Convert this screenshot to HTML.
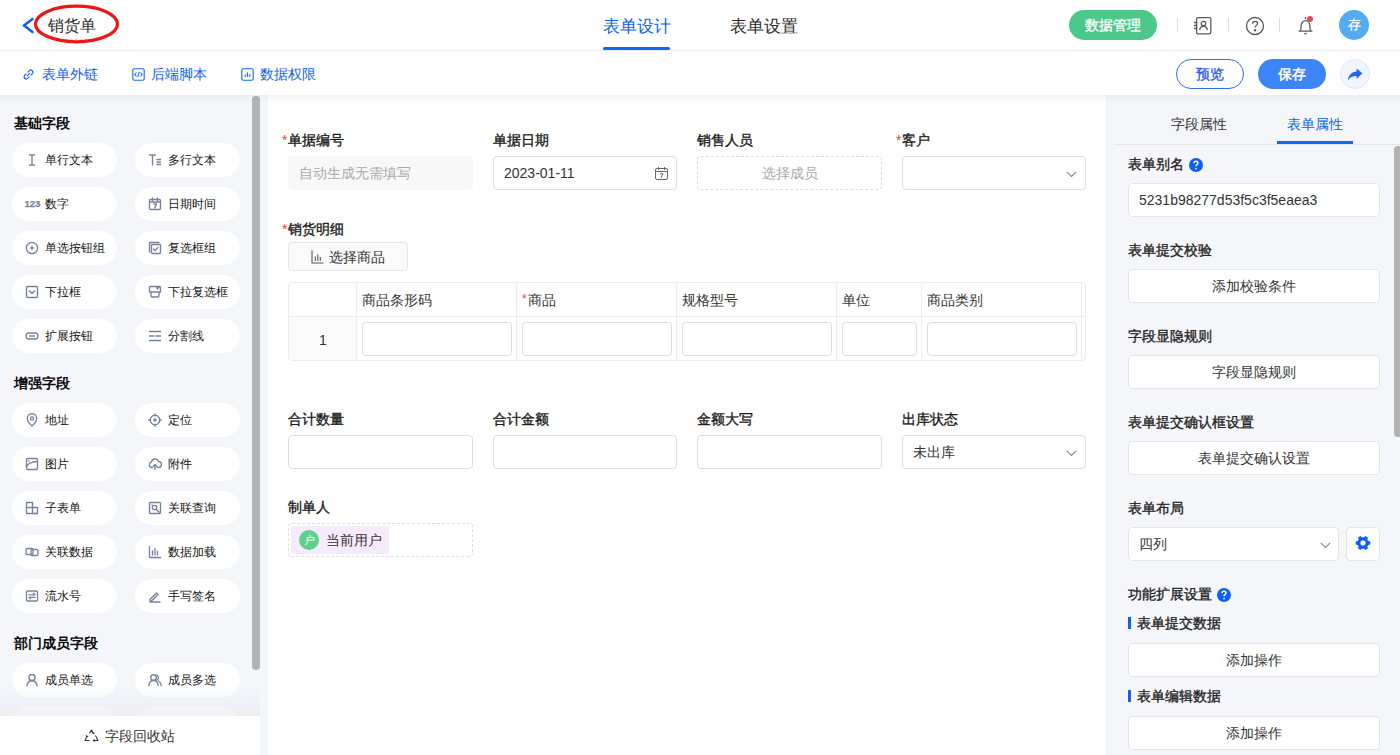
<!DOCTYPE html>
<html><head><meta charset="utf-8">
<style>
*{box-sizing:border-box;margin:0;padding:0}
html,body{width:1400px;height:755px;overflow:hidden;background:#fff;font-family:"Liberation Sans",sans-serif;color:#333}
.a{position:absolute}
.t14{font-size:14px;line-height:20px;white-space:nowrap}
.t12{font-size:12px;line-height:20px;white-space:nowrap}
.b{font-weight:bold}
svg{display:block}
/* header */
#hdr{left:0;top:0;width:1400px;height:51px;background:#fff;border-bottom:1px solid #ebedf0}
#tb{left:0;top:51px;width:1400px;height:44px;background:#fff}
.blue{color:#0f5ef8}
.divl{width:1px;height:14px;top:18px;background:#dddddd}
/* left panel */
#lp{left:0;top:95px;width:268px;height:660px;background:#f5f6fa;overflow:hidden}
.sec{left:14px;font-size:14px;line-height:20px;font-weight:bold;color:#0a0a0a}
.pill{width:105px;height:34px;border-radius:17px;background:#fff}
.pill .ic{position:absolute;left:13px;top:10px;width:14px;height:14px}
.pill .tx{position:absolute;left:33px;top:7px;font-size:12px;line-height:20px;color:#141414;white-space:nowrap}
/* canvas */
#cv{left:268px;top:95px;width:838px;height:660px;background:#fff;overflow:hidden}
.lbl{font-size:14px;line-height:20px;font-weight:500;color:#1a1a1a;-webkit-text-stroke:0.35px #1a1a1a;white-space:nowrap}
.req{color:#f04134;font-weight:normal}
.inp{height:34px;border:1px solid #dddddd;border-radius:4px;background:#fff}
/* right panel */
#rp{left:1106px;top:95px;width:294px;height:660px;background:#f5f6fa;overflow:hidden}
.rbtn{left:22px;width:252px;height:34px;border:1px solid #e3e4e8;border-radius:4px;background:#fff;text-align:center;font-size:14px;line-height:32px;color:#333}
.rl{left:22px;font-size:14px;line-height:20px;font-weight:500;color:#1f1f1f;-webkit-text-stroke:0.35px #1f1f1f;white-space:nowrap}
</style></head><body>

<!-- HEADER -->
<div id="hdr" class="a">
  <svg class="a" style="left:20px;top:14px" width="18" height="24" viewBox="0 0 18 24"><polyline points="12.5,5 4,11.5 12.5,18" fill="none" stroke="#0f5ff2" stroke-width="2.6" stroke-linecap="round" stroke-linejoin="round"/></svg>
  <div class="a" style="left:48px;top:16px;font-size:16px;line-height:20px;color:#2b2b2b">销货单</div>
  <div class="a" style="left:46px;top:39px;width:46px;border-top:1px dashed #d8dde4"></div>
  <svg class="a" style="left:30px;top:2px" width="94" height="46" viewBox="0 0 94 46"><ellipse cx="46.5" cy="22" rx="41" ry="17.8" fill="none" stroke="#f01414" stroke-width="3.2"/></svg>

  <div class="a" style="left:603px;top:16px;font-size:16.5px;line-height:20px;color:#0a5ff7">表单设计</div>
  <div class="a" style="left:603px;top:47px;width:67px;height:3px;border-radius:2px;background:#1466f5"></div>
  <div class="a" style="left:730px;top:16px;font-size:16.5px;line-height:20px;color:#2b2b2b">表单设置</div>

  <div class="a" style="left:1069px;top:10px;width:88px;height:30px;border-radius:15px;background:#4cc98a;color:#fff;font-size:14px;line-height:30px;text-align:center;-webkit-text-stroke:0.3px #fff">数据管理</div>
  <div class="a divl" style="left:1177px"></div>
  <svg class="a" style="left:1193px;top:16px" width="20" height="20" viewBox="0 0 20 20" fill="none" stroke="#5a5a5a" stroke-width="1.3"><rect x="3.6" y="1.6" width="14.2" height="16.2" rx="1.4"/><circle cx="10.5" cy="7.6" r="2.3"/><path d="M6.6 14c0.5-2.4 1.9-3.6 3.9-3.6s3.4 1.2 3.9 3.6"/><path d="M1 6.5h3.2M1 9.5h3.2M1 12.5h3.2"/></svg>
  <div class="a divl" style="left:1228px"></div>
  <svg class="a" style="left:1245px;top:16px" width="20" height="20" viewBox="0 0 20 20" fill="none" stroke="#5a5a5a" stroke-width="1.3"><circle cx="10" cy="10" r="8.5"/><path d="M7.6 7.8c0-1.5 1.1-2.5 2.5-2.5s2.5 1 2.5 2.3c0 1.9-2.5 2-2.5 3.9"/><circle cx="10.1" cy="14.3" r="0.6" fill="#5a5a5a"/></svg>
  <div class="a divl" style="left:1279px"></div>
  <svg class="a" style="left:1296px;top:15px" width="20" height="21" viewBox="0 0 20 21" fill="none" stroke="#5a5a5a" stroke-width="1.3"><path d="M2.6 16.2h13.8M4 16.2c1-1.2 1.2-3 1.2-5.6 0-2.8 1.9-4.9 4.3-4.9s4.3 2.1 4.3 4.9c0 2.6 0.2 4.4 1.2 5.6"/><path d="M8.3 18.6h2.4"/><path d="M9.5 2v2"/></svg>
  <div class="a" style="left:1307px;top:16px;width:6px;height:6px;border-radius:50%;background:#e74c4c"></div>
  <div class="a" style="left:1339px;top:10px;width:30px;height:30px;border-radius:50%;background:#55abef;color:#fff;font-size:13px;line-height:30px;text-align:center;-webkit-text-stroke:0.3px #fff">存</div>
</div>

<!-- TOOLBAR -->
<div id="tb" class="a">
  <svg class="a" style="left:22px;top:17px" width="13" height="13" viewBox="0 0 13 13" fill="none" stroke="#1a63f5" stroke-width="1.2"><path d="M5.2 7.8l2.6-2.6"/><path d="M4.3 5.6L2.6 7.3a2.2 2.2 0 0 0 3.1 3.1l1.7-1.7"/><path d="M8.7 7.4l1.7-1.7a2.2 2.2 0 0 0-3.1-3.1L5.6 4.3"/></svg>
  <div class="a t14 blue" style="left:42px;top:13px">表单外链</div>
  <svg class="a" style="left:132px;top:17px" width="13" height="13" viewBox="0 0 13 13" fill="none" stroke="#1a63f5" stroke-width="1.1"><rect x="0.8" y="0.8" width="11.4" height="11.4" rx="1.5"/><path d="M4.5 4.5L2.8 6.5l1.7 2M8.5 4.5l1.7 2-1.7 2M7.2 3.8L5.8 9.2"/></svg>
  <div class="a t14 blue" style="left:151px;top:13px">后端脚本</div>
  <svg class="a" style="left:241px;top:17px" width="13" height="13" viewBox="0 0 13 13" fill="none" stroke="#1a63f5" stroke-width="1.1"><rect x="0.8" y="0.8" width="11.4" height="11.4" rx="1.5"/><path d="M4.2 9V6.5M6.5 9V4.5M8.8 9V6"/></svg>
  <div class="a t14 blue" style="left:260px;top:13px">数据权限</div>

  <div class="a" style="left:1176px;top:8px;width:68px;height:30px;border:1px solid #2f6df6;border-radius:15px;color:#2756e8;font-size:14px;line-height:28px;text-align:center;-webkit-text-stroke:0.3px #2756e8">预览</div>
  <div class="a b" style="left:1258px;top:8px;width:68px;height:30px;border-radius:15px;background:#3d84f7;color:#fff;font-size:14px;line-height:30px;text-align:center">保存</div>
  <div class="a" style="left:1340px;top:8px;width:30px;height:30px;border-radius:50%;background:#f0f5ff;border:1px solid #dde7fb"></div>
  <svg class="a" style="left:1347px;top:17px" width="16" height="13" viewBox="0 0 16 13"><path d="M15.3 5.2L9.6 0.6v2.9C4.6 3.9 1.6 7.2 0.8 12.4c1.9-3 4.6-4.4 8.8-4.4v2.9z" fill="#1f66f0"/></svg>
</div>

<!-- LEFT PANEL -->
<div id="lp" class="a">
<div class="a sec" style="top:18px">基础字段</div>
<div class="a pill" style="left:12px;top:48px"><svg class="ic" width="14" height="14" viewBox="0 0 14 14" fill="none" stroke="#75829b" stroke-width="1.35" stroke-linecap="round" stroke-linejoin="round"><path d="M4.5 2h5M4.5 12h5M7 2v10"/></svg><span class="tx">单行文本</span></div>
<div class="a pill" style="left:135px;top:48px"><svg class="ic" width="14" height="14" viewBox="0 0 14 14" fill="none" stroke="#75829b" stroke-width="1.35" stroke-linecap="round" stroke-linejoin="round"><path d="M1.5 2h6M4.5 2v10M9 6.5h3.5M9 9h3.5M9 11.5h3.5"/></svg><span class="tx">多行文本</span></div>
<div class="a pill" style="left:12px;top:92px"><div class="ic" style="left:12.5px;top:10px;width:auto;height:auto;font-size:9.5px;line-height:14px;font-weight:bold;-webkit-text-stroke:0.25px #75829b;color:#75829b;font-family:'Liberation Sans',sans-serif">123</div><span class="tx">数字</span></div>
<div class="a pill" style="left:135px;top:92px"><svg class="ic" width="14" height="14" viewBox="0 0 14 14" fill="none" stroke="#75829b" stroke-width="1.35" stroke-linecap="round" stroke-linejoin="round"><rect x="1.5" y="2.5" width="11" height="10" rx="1.2"/><path d="M1.5 5h11M4.5 1v2.5M9.5 1v2.5M5.8 7h2.6l-1.6 4"/></svg><span class="tx">日期时间</span></div>
<div class="a pill" style="left:12px;top:136px"><svg class="ic" width="14" height="14" viewBox="0 0 14 14" fill="none" stroke="#75829b" stroke-width="1.35" stroke-linecap="round" stroke-linejoin="round"><circle cx="7" cy="7" r="5.6"/><circle cx="7" cy="7" r="1" fill="#75829b"/></svg><span class="tx">单选按钮组</span></div>
<div class="a pill" style="left:135px;top:136px"><svg class="ic" width="14" height="14" viewBox="0 0 14 14" fill="none" stroke="#75829b" stroke-width="1.35" stroke-linecap="round" stroke-linejoin="round"><path d="M1.5 11V1.5H11"/><rect x="3.5" y="3.5" width="9" height="9" rx="0.8"/><path d="M5.5 8l1.5 1.5 3-3"/></svg><span class="tx">复选框组</span></div>
<div class="a pill" style="left:12px;top:180px"><svg class="ic" width="14" height="14" viewBox="0 0 14 14" fill="none" stroke="#75829b" stroke-width="1.35" stroke-linecap="round" stroke-linejoin="round"><rect x="1.5" y="1.5" width="11" height="11" rx="1.2"/><path d="M4.5 6l2.5 2.5L9.5 6"/></svg><span class="tx">下拉框</span></div>
<div class="a pill" style="left:135px;top:180px"><svg class="ic" width="14" height="14" viewBox="0 0 14 14" fill="none" stroke="#75829b" stroke-width="1.35" stroke-linecap="round" stroke-linejoin="round"><path d="M1.5 7V2.5a1 1 0 0 1 1-1h9a1 1 0 0 1 1 1V7zM3 7v3.5A1.5 1.5 0 0 0 4.5 12h5a1.5 1.5 0 0 0 1.5-1.5V7M8 1.5l1.5 2.5 2-2.5"/></svg><span class="tx">下拉复选框</span></div>
<div class="a pill" style="left:12px;top:224px"><svg class="ic" width="14" height="14" viewBox="0 0 14 14" fill="none" stroke="#75829b" stroke-width="1.35" stroke-linecap="round" stroke-linejoin="round"><rect x="1" y="4" width="12" height="6" rx="3"/><path d="M4.5 7h5"/></svg><span class="tx">扩展按钮</span></div>
<div class="a pill" style="left:135px;top:224px"><svg class="ic" width="14" height="14" viewBox="0 0 14 14" fill="none" stroke="#75829b" stroke-width="1.35" stroke-linecap="round" stroke-linejoin="round"><path d="M1.5 2.5h11M1.5 11.5h11M1.5 7h4.5M8 7h4.5"/></svg><span class="tx">分割线</span></div>
<div class="a sec" style="top:278px">增强字段</div>
<div class="a pill" style="left:12px;top:308px"><svg class="ic" width="14" height="14" viewBox="0 0 14 14" fill="none" stroke="#75829b" stroke-width="1.35" stroke-linecap="round" stroke-linejoin="round"><path d="M7 13s-4.7-4.3-4.7-7.6a4.7 4.7 0 0 1 9.4 0C11.7 8.7 7 13 7 13z"/><circle cx="7" cy="5.5" r="1.6"/></svg><span class="tx">地址</span></div>
<div class="a pill" style="left:135px;top:308px"><svg class="ic" width="14" height="14" viewBox="0 0 14 14" fill="none" stroke="#75829b" stroke-width="1.35" stroke-linecap="round" stroke-linejoin="round"><circle cx="7" cy="7" r="4.8"/><circle cx="7" cy="7" r="1" fill="#75829b"/><path d="M7 0.8v2M7 11.2v2M0.8 7h2M11.2 7h2"/></svg><span class="tx">定位</span></div>
<div class="a pill" style="left:12px;top:352px"><svg class="ic" width="14" height="14" viewBox="0 0 14 14" fill="none" stroke="#75829b" stroke-width="1.35" stroke-linecap="round" stroke-linejoin="round"><rect x="1.5" y="1.5" width="11" height="11" rx="1.2"/><path d="M1.5 9.5C4 6 6 5 12.5 4.5M3.5 4h0.5"/></svg><span class="tx">图片</span></div>
<div class="a pill" style="left:135px;top:352px"><svg class="ic" width="14" height="14" viewBox="0 0 14 14" fill="none" stroke="#75829b" stroke-width="1.35" stroke-linecap="round" stroke-linejoin="round"><path d="M4.5 10.5H3.8A2.8 2.8 0 0 1 3.5 5a3.6 3.6 0 0 1 7-0.5 2.9 2.9 0 0 1 0 6h-1"/><path d="M7 12.5V7.5M5.3 9.2L7 7.5l1.7 1.7"/></svg><span class="tx">附件</span></div>
<div class="a pill" style="left:12px;top:396px"><svg class="ic" width="14" height="14" viewBox="0 0 14 14" fill="none" stroke="#75829b" stroke-width="1.35" stroke-linecap="round" stroke-linejoin="round"><path d="M1.5 12.5V1.5h6v5h5v6zM1.5 6.5h6M7.5 6.5v6"/></svg><span class="tx">子表单</span></div>
<div class="a pill" style="left:135px;top:396px"><svg class="ic" width="14" height="14" viewBox="0 0 14 14" fill="none" stroke="#75829b" stroke-width="1.35" stroke-linecap="round" stroke-linejoin="round"><rect x="1.5" y="1.5" width="11" height="11" rx="1"/><circle cx="6.5" cy="6.5" r="2.2"/><path d="M8.2 8.2l3 3M4 3.5h0"/></svg><span class="tx">关联查询</span></div>
<div class="a pill" style="left:12px;top:440px"><svg class="ic" width="14" height="14" viewBox="0 0 14 14" fill="none" stroke="#75829b" stroke-width="1.35" stroke-linecap="round" stroke-linejoin="round"><rect x="1" y="3.5" width="7" height="6" rx="1.2"/><rect x="6" y="4.5" width="7" height="6" rx="1.2"/></svg><span class="tx">关联数据</span></div>
<div class="a pill" style="left:135px;top:440px"><svg class="ic" width="14" height="14" viewBox="0 0 14 14" fill="none" stroke="#75829b" stroke-width="1.35" stroke-linecap="round" stroke-linejoin="round"><path d="M1.5 1.5v11h11M4.5 10V6M7 10V3.5M9.5 10V6.5"/></svg><span class="tx">数据加载</span></div>
<div class="a pill" style="left:12px;top:484px"><svg class="ic" width="14" height="14" viewBox="0 0 14 14" fill="none" stroke="#75829b" stroke-width="1.35" stroke-linecap="round" stroke-linejoin="round"><rect x="1.5" y="2" width="11" height="10" rx="1"/><path d="M4 5.8h6L8.4 4.3M10 8.3H4l1.6 1.5"/></svg><span class="tx">流水号</span></div>
<div class="a pill" style="left:135px;top:484px"><svg class="ic" width="14" height="14" viewBox="0 0 14 14" fill="none" stroke="#75829b" stroke-width="1.35" stroke-linecap="round" stroke-linejoin="round"><path d="M2 10.5l6.5-6.5 1.5 1.5-6.5 6.5H2zM2 13h10"/></svg><span class="tx">手写签名</span></div>
<div class="a sec" style="top:538px">部门成员字段</div>
<div class="a pill" style="left:12px;top:568px"><svg class="ic" width="14" height="14" viewBox="0 0 14 14" fill="none" stroke="#75829b" stroke-width="1.35" stroke-linecap="round" stroke-linejoin="round"><circle cx="7" cy="4.5" r="3"/><path d="M1.8 13c0.5-3.5 2.5-5.3 5.2-5.3s4.7 1.8 5.2 5.3"/></svg><span class="tx">成员单选</span></div>
<div class="a pill" style="left:135px;top:568px"><svg class="ic" width="14" height="14" viewBox="0 0 14 14" fill="none" stroke="#75829b" stroke-width="1.35" stroke-linecap="round" stroke-linejoin="round"><circle cx="5.5" cy="4.5" r="2.8"/><path d="M0.8 12.5c0.4-3.2 2.2-5 4.7-5s4.3 1.8 4.7 5M8.8 2a2.7 2.7 0 0 1 0 5M10.5 8c1.5 0.8 2.4 2.3 2.7 4.5"/></svg><span class="tx">成员多选</span></div>
<div class="a pill" style="left:12px;top:612px"><span class="tx">部门单选</span></div>
<div class="a pill" style="left:135px;top:612px"><span class="tx">部门多选</span></div>
<div class="a" style="left:252px;top:1px;width:8px;height:574px;border-radius:4px;background:#b3b3b3"></div>
<div class="a" style="left:0;top:591px;width:260px;height:30px;background:linear-gradient(rgba(245,246,250,0),rgba(230,232,238,0.6))"></div>
<div class="a" style="left:0;top:621px;width:260px;height:39px;background:#fff"><svg class="a" style="left:84px;top:13px" width="15" height="14" viewBox="0 0 15 14" fill="none" stroke="#333" stroke-width="1.1" stroke-linejoin="round"><path d="M5.5 4.5L7.5 1l2 3.5M11.5 6.5l2.5 5H9.5M5.5 11.5H1l2-4"/><path d="M8.5 3.5l1 1 1-0.5M10.5 12.5l-1-1 1-1M2 6.5l1 1 1.2-0.3"/></svg><span class="a t14" style="left:105px;top:10px;color:#333">字段回收站</span></div>

</div>

<!-- CANVAS -->
<div id="cv" class="a">
<div class="a lbl" style="left:20px;top:35px">单据编号</div><div class="a req" style="left:14px;top:35px;font-size:14px;line-height:20px">*</div>
<div class="a lbl" style="left:225px;top:35px">单据日期</div>
<div class="a lbl" style="left:429px;top:35px">销售人员</div>
<div class="a lbl" style="left:634px;top:35px">客户</div><div class="a req" style="left:628px;top:35px;font-size:14px;line-height:20px">*</div>
<div class="a" style="left:20px;top:61px;width:185px;height:34px;border-radius:4px;background:#f8f8f9"><span class="a t14" style="left:11px;top:7px;color:#a9a9a9">自动生成无需填写</span></div>
<div class="a inp" style="left:225px;top:61px;width:184px"><span class="a t14" style="left:10px;top:6px;color:#333">2023-01-11</span><svg class="a" style="left:160px;top:9px" width="15" height="15" viewBox="0 0 15 15" fill="none" stroke="#666" stroke-width="1"><rect x="1.5" y="2.5" width="12" height="11" rx="1.5"/><path d="M1.5 5.5h12M4.5 1v3M10.5 1v3M6 7.8h2.8L7 12"/></svg></div>
<div class="a" style="left:429px;top:61px;width:185px;height:34px;border:1px dashed #dddddd;border-radius:4px;text-align:center;font-size:14px;line-height:32px;color:#a9a9a9">选择成员</div>
<div class="a inp" style="left:634px;top:61px;width:184px"><svg class="a" style="left:163px;top:14px" width="11" height="7" viewBox="0 0 11 7" fill="none" stroke="#888" stroke-width="1.1"><path d="M0.8 0.8L5.5 5.5 10.2 0.8"/></svg></div>
<div class="a lbl" style="left:20px;top:124px">销货明细</div><div class="a req" style="left:14px;top:124px;font-size:14px;line-height:20px">*</div>
<div class="a" style="left:20px;top:147px;width:120px;height:29px;border:1px solid #e3e3e3;border-radius:4px;background:#fafafa"><svg class="a" style="left:22px;top:7px" width="13" height="14" viewBox="0 0 13 14" fill="none" stroke="#555" stroke-width="1.1"><path d="M1 0.5v12.5h11.5M4.3 11V6.5M6.8 11V4.5M9.3 11V7"/></svg><span class="a t14" style="left:40px;top:4px;color:#333">选择商品</span></div>
<div class="a" style="left:20px;top:187px;width:798px;height:79px;border:1px solid #ececec;border-radius:4px;overflow:hidden;background:#fff">
<div class="a" style="left:0;top:34px;width:67px;height:44px;background:#fbfbfb"></div>
<div class="a" style="left:0;top:33px;width:798px;height:1px;background:#ececec"></div>
<div class="a" style="left:67px;top:0;width:1px;height:79px;background:#ececec"></div>
<div class="a" style="left:227px;top:0;width:1px;height:79px;background:#ececec"></div>
<div class="a" style="left:387px;top:0;width:1px;height:79px;background:#ececec"></div>
<div class="a" style="left:547px;top:0;width:1px;height:79px;background:#ececec"></div>
<div class="a" style="left:632px;top:0;width:1px;height:79px;background:#ececec"></div>
<div class="a" style="left:792px;top:0;width:1px;height:79px;background:#ececec"></div>
<span class="a t14" style="left:30px;top:47px;color:#333">1</span>
<span class="a t14" style="left:73px;top:7px;color:#333">商品条形码</span>
<div class="a inp" style="left:73px;top:39px;width:150px"></div>
<span class="a req" style="left:233px;top:6px;font-size:12px;line-height:20px">*</span><span class="a t14" style="left:239px;top:7px;color:#333">商品</span>
<div class="a inp" style="left:233px;top:39px;width:150px"></div>
<span class="a t14" style="left:393px;top:7px;color:#333">规格型号</span>
<div class="a inp" style="left:393px;top:39px;width:150px"></div>
<span class="a t14" style="left:553px;top:7px;color:#333">单位</span>
<div class="a inp" style="left:553px;top:39px;width:75px"></div>
<span class="a t14" style="left:638px;top:7px;color:#333">商品类别</span>
<div class="a inp" style="left:638px;top:39px;width:150px"></div>
<div class="a" style="left:798px;top:0;width:1px;height:79px;background:#ececec"></div>
</div>
<div class="a lbl" style="left:20px;top:314px">合计数量</div>
<div class="a lbl" style="left:225px;top:314px">合计金额</div>
<div class="a lbl" style="left:429px;top:314px">金额大写</div>
<div class="a lbl" style="left:634px;top:314px">出库状态</div>
<div class="a inp" style="left:20px;top:340px;width:185px"></div>
<div class="a inp" style="left:225px;top:340px;width:184px"></div>
<div class="a inp" style="left:429px;top:340px;width:185px"></div>
<div class="a inp" style="left:634px;top:340px;width:184px"><span class="a t14" style="left:10px;top:6px;color:#333">未出库</span><svg class="a" style="left:163px;top:14px" width="11" height="7" viewBox="0 0 11 7" fill="none" stroke="#888" stroke-width="1.1"><path d="M0.8 0.8L5.5 5.5 10.2 0.8"/></svg></div>
<div class="a lbl" style="left:20px;top:402px">制单人</div>
<div class="a" style="left:20px;top:428px;width:185px;height:34px;border:1px dashed #dddddd;border-radius:4px"><div class="a" style="left:2px;top:2px;width:98px;height:28px;border-radius:2px;background:#f6ebfd"></div><div class="a" style="left:10px;top:6px;width:20px;height:20px;border-radius:50%;background:#5fcf89;color:#fff;font-size:11px;line-height:20px;text-align:center">户</div><span class="a t14" style="left:37px;top:6px;color:#333">当前用户</span></div>

</div>

<!-- RIGHT PANEL -->
<div id="rp" class="a">
<div class="a t14" style="left:65px;top:19px;color:#333">字段属性</div>
<div class="a t14" style="left:181px;top:19px;color:#0a5ff7">表单属性</div>
<div class="a" style="left:171px;top:46px;width:76px;height:3px;background:#1466f5"></div>
<div class="a" style="left:8px;top:49px;width:286px;height:1px;background:#e4e4e4"></div>
<div class="a rl" style="top:59px">表单别名</div><svg class="a" style="left:83px;top:63px" width="14" height="14" viewBox="0 0 14 14"><circle cx="7" cy="7" r="7" fill="#0d60f5"/><path d="M5 5.3c0-1.2 0.9-2 2-2s2 0.8 2 1.8c0 1.5-2 1.6-2 3.1" fill="none" stroke="#fff" stroke-width="1.4"/><circle cx="7" cy="10.6" r="0.85" fill="#fff"/></svg>
<div class="a" style="left:22px;top:88px;width:252px;height:34px;border:1px solid #e3e4e8;border-radius:4px;background:#fff"><span class="a t14" style="left:10px;top:6px;color:#333">5231b98277d53f5c3f5eaea3</span></div>
<div class="a rl" style="top:145px">表单提交校验</div>
<div class="a rbtn" style="top:174px">添加校验条件</div>
<div class="a rl" style="top:231px">字段显隐规则</div>
<div class="a rbtn" style="top:260px">字段显隐规则</div>
<div class="a rl" style="top:317px">表单提交确认框设置</div>
<div class="a rbtn" style="top:346px">表单提交确认设置</div>
<div class="a rl" style="top:403px">表单布局</div>
<div class="a" style="left:22px;top:432px;width:211px;height:34px;border:1px solid #e3e4e8;border-radius:4px;background:#fff"><span class="a t14" style="left:10px;top:6px;color:#333">四列</span><svg class="a" style="left:191px;top:14px" width="11" height="7" viewBox="0 0 11 7" fill="none" stroke="#888" stroke-width="1.1"><path d="M0.8 0.8L5.5 5.5 10.2 0.8"/></svg></div>
<div class="a" style="left:240px;top:432px;width:34px;height:34px;border:1px solid #e3e4e8;border-radius:4px;background:#fff"><svg class="a" style="left:8px;top:7px" width="16" height="16" viewBox="0 0 16 16"><path fill="#0b5cff" fill-rule="evenodd" stroke="#0b5cff" stroke-width="0.8" stroke-linejoin="round" d="M13.04 6.36 L14.89 6.76 L14.89 9.24 L13.04 9.64 L11.94 11.55 L12.52 13.35 L10.37 14.59 L9.10 13.18 L6.90 13.18 L5.63 14.59 L3.48 13.35 L4.06 11.55 L2.96 9.64 L1.11 9.24 L1.11 6.76 L2.96 6.36 L4.06 4.45 L3.48 2.65 L5.63 1.41 L6.90 2.82 L9.10 2.82 L10.37 1.41 L12.52 2.65 L11.94 4.45Z M8 4.9a3.1 3.1 0 1 0 0 6.2 3.1 3.1 0 0 0 0-6.2z"/></svg></div>
<div class="a rl" style="top:489px">功能扩展设置</div><svg class="a" style="left:111px;top:493px" width="14" height="14" viewBox="0 0 14 14"><circle cx="7" cy="7" r="7" fill="#0d60f5"/><path d="M5 5.3c0-1.2 0.9-2 2-2s2 0.8 2 1.8c0 1.5-2 1.6-2 3.1" fill="none" stroke="#fff" stroke-width="1.4"/><circle cx="7" cy="10.6" r="0.85" fill="#fff"/></svg>
<div class="a" style="left:22px;top:522px;width:3px;height:12px;background:#0d60f5"></div><div class="a rl" style="left:31px;top:518px">表单提交数据</div>
<div class="a rbtn" style="top:548px">添加操作</div>
<div class="a" style="left:22px;top:595px;width:3px;height:12px;background:#0d60f5"></div><div class="a rl" style="left:31px;top:591px">表单编辑数据</div>
<div class="a rbtn" style="top:621px">添加操作</div>
<div class="a" style="left:288px;top:51px;width:8px;height:291px;border-radius:4px;background:#b3b3b3"></div>

</div>

<div class="a" style="left:0;top:95px;width:1400px;height:10px;background:linear-gradient(rgba(0,0,0,0.04),rgba(0,0,0,0))"></div>
</body></html>
